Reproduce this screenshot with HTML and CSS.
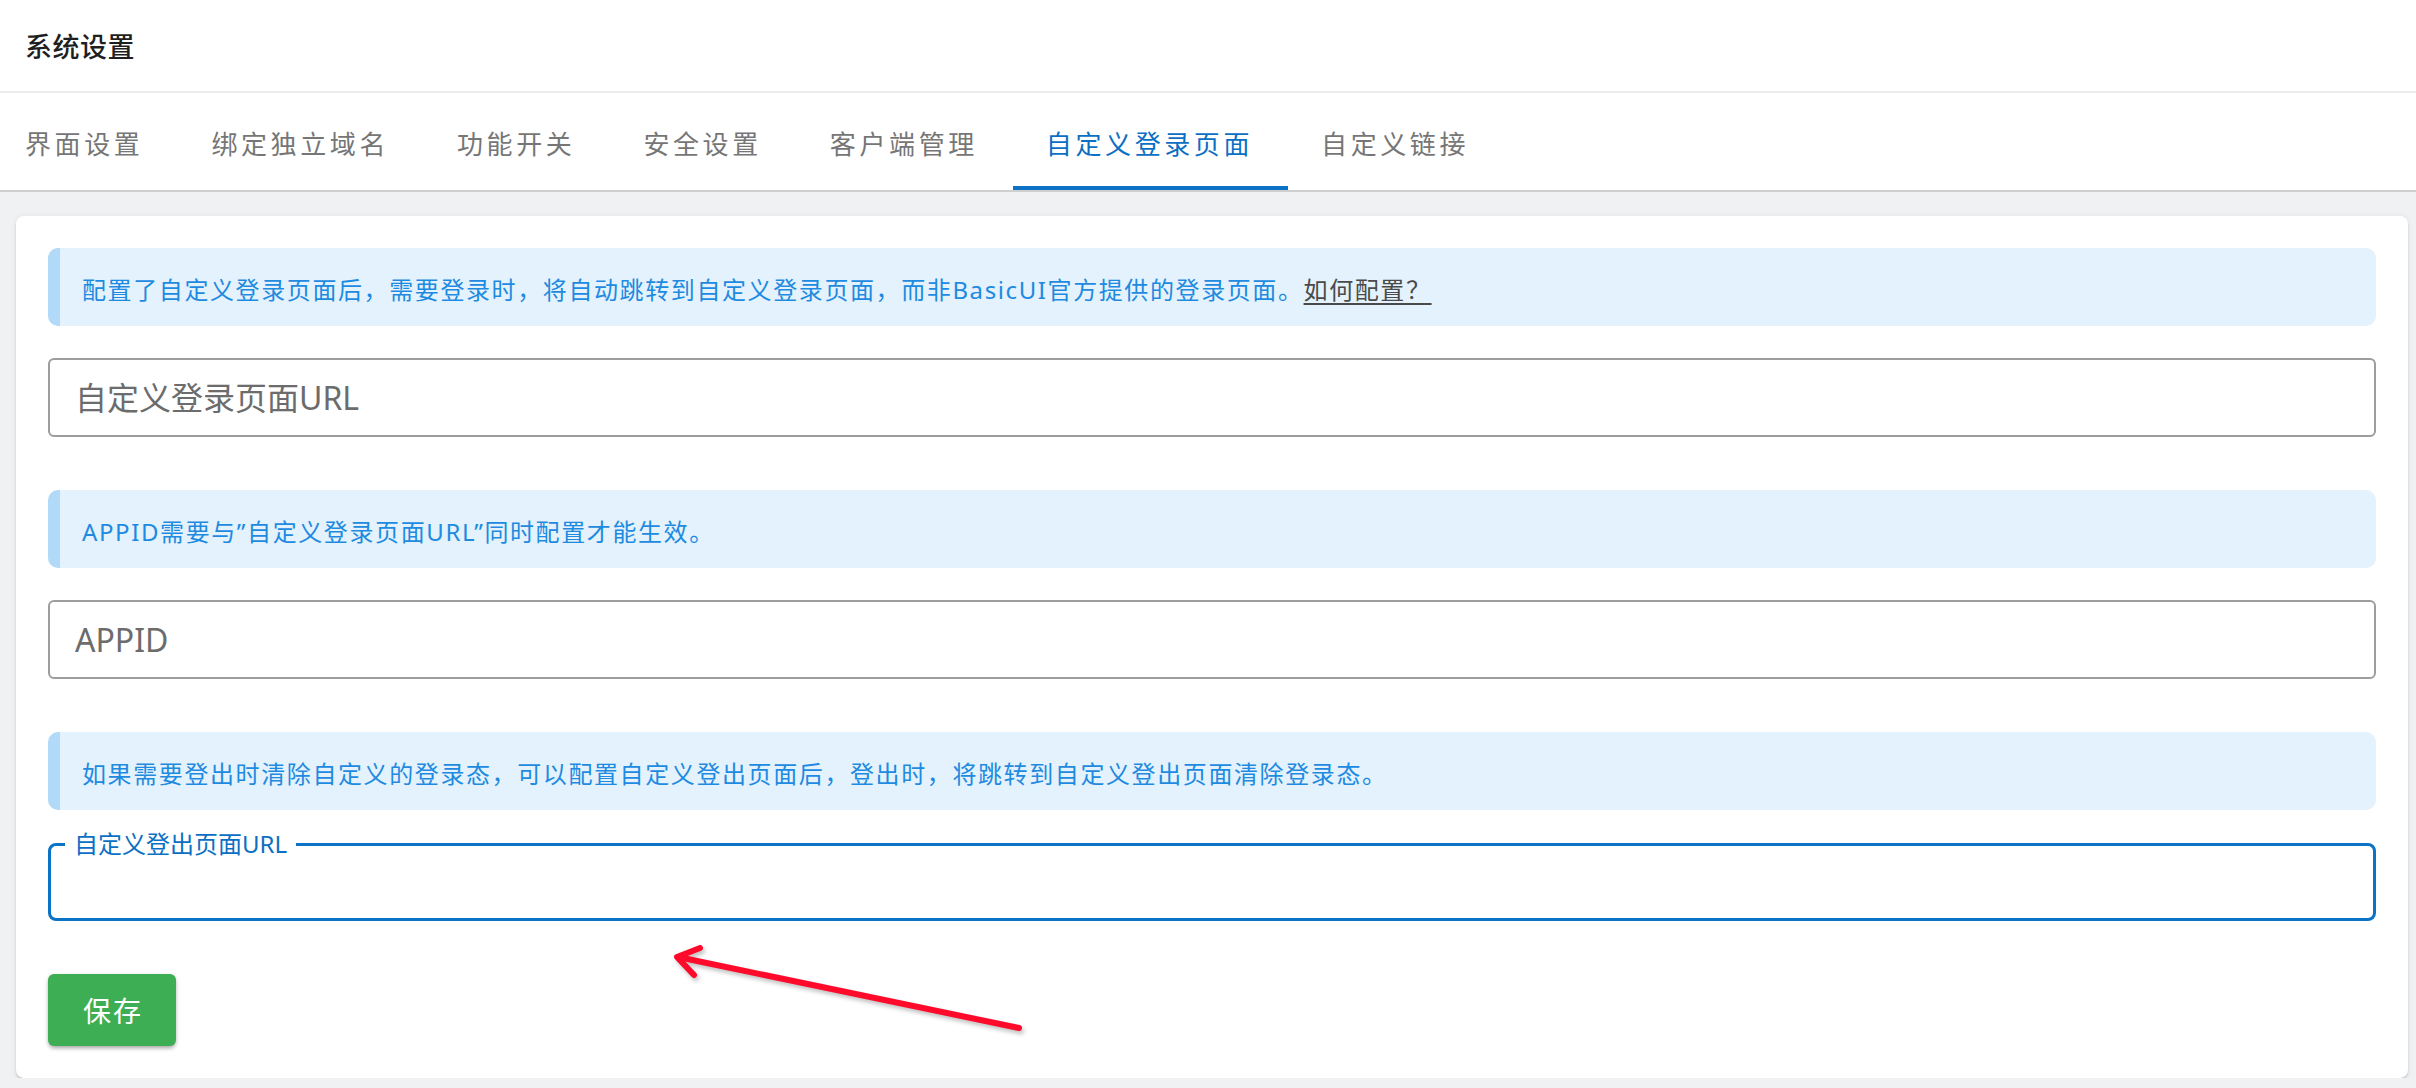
FILE: index.html
```html
<!DOCTYPE html>
<html>
<head>
  <meta charset="utf-8">
  <link rel="stylesheet" href="styles.css">
</head>
<body>
  <!-- Page header -->
  <header class="topbar">
    <h1 class="page-title">系统设置</h1>
  </header>

  <!-- Settings tabs -->
  <nav class="tabs">
    <a class="tab">界面设置</a>
    <a class="tab">绑定独立域名</a>
    <a class="tab">功能开关</a>
    <a class="tab">安全设置</a>
    <a class="tab">客户端管理</a>
    <a class="tab active">自定义登录页面</a>
    <a class="tab">自定义链接</a>
  </nav>

  <main class="content">
    <div class="card">
      <div class="alert">
        <span>配置了自定义登录页面后，需要登录时，将自动跳转到自定义登录页面，而非BasicUI官方提供的登录页面。<a class="alert-link">如何配置？</a></span>
      </div>
      <input class="text-input" type="text" placeholder="自定义登录页面URL">

      <div class="alert">
        <span>APPID需要与”自定义登录页面URL”同时配置才能生效。</span>
      </div>
      <input class="text-input" type="text" placeholder="APPID">

      <div class="alert">
        <span>如果需要登出时清除自定义的登录态，可以配置自定义登出页面后，登出时，将跳转到自定义登出页面清除登录态。</span>
      </div>
      <fieldset class="field-outlined">
        <legend class="field-label">自定义登出页面URL</legend>
        <input class="field-input" type="text">
      </fieldset>

      <button class="btn-save">保存</button>
    </div>
  </main>

  <!-- Red annotation arrow -->
  <svg class="annotation" width="2416" height="1088" viewBox="0 0 2416 1088">
    <g fill="none" stroke="#ff0a2a" stroke-width="6" stroke-linecap="round" stroke-linejoin="round">
      <path d="M1019 1028 L678 957"/>
      <path d="M700 948 L677 957 L694 975"/>
    </g>
  </svg>
</body>
</html>
```

FILE: styles.css
```css
* {
  margin: 0;
  padding: 0;
  box-sizing: border-box;
}

body {
  position: relative;
  background: #f0f1f3;
  font-family: "Noto Sans", "Noto Sans CJK SC", sans-serif;
  overflow: hidden;
}

/* Header */
.topbar {
  height: 93px;
  background: #fff;
  border-bottom: 2px solid #ededed;
  display: flex;
  align-items: center;
  padding-left: 25px;
}

.page-title {
  font-size: 27px;
  font-weight: 500;
  color: #1f1f1f;
  letter-spacing: 0.5px;
}

/* Tabs */
.tabs {
  height: 99px;
  background: #fff;
  border-bottom: 2px solid #cfcfcf;
  display: flex;
}

.tab {
  position: relative;
  display: flex;
  align-items: center;
  padding: 3px 35px 0 33px;
  font-size: 26px;
  letter-spacing: 3.6px;
  color: #767676;
  cursor: pointer;
}

.tab:first-child {
  padding-left: 25px;
}

.tab.active {
  color: #0b6fc3;
}

.tab.active::after {
  content: '';
  position: absolute;
  left: 0;
  right: 0;
  bottom: 0;
  height: 4px;
  background: #0b72c6;
}

/* Content */
.content {
  padding: 24px 8px 0 16px;
}

.card {
  background: #fff;
  border-radius: 8px;
  padding: 32px;
  box-shadow: 0 2px 3px -1px rgba(0, 0, 0, 0.28), 0 1px 6px rgba(0, 0, 0, 0.08);
}

.alert {
  height: 78px;
  display: flex;
  align-items: center;
  padding: 3px 0 0 22px;
  margin-bottom: 32px;
  background: #e3f2fc;
  border-left: 12px solid #b1d9f8;
  border-radius: 10px;
  font-size: 24px;
  letter-spacing: 1.6px;
  color: #1e8ae0;
}

.alert-link {
  color: #4a4a4a;
  text-decoration: underline;
  text-underline-offset: 4px;
  cursor: pointer;
}

.text-input {
  display: block;
  width: 100%;
  height: 79px;
  margin-bottom: 53px;
  padding: 0 25px;
  border: 2px solid #9d9d9d;
  border-radius: 6px;
  font-family: inherit;
  font-size: 32px;
  color: #333;
  outline: none;
}

.text-input::placeholder {
  color: #6c6c6c;
}

/* Focused outlined field */
.field-outlined {
  margin-top: -10px;
  padding: 0 14px;
  border: 3px solid #0b72c6;
  border-radius: 8px;
  min-width: 0;
}

.field-label {
  padding: 0 9px;
  font-size: 24px;
  line-height: 24px;
  color: #0b6fc3;
}

.field-input {
  display: block;
  width: 100%;
  height: 62px;
  border: none;
  outline: none;
  padding: 0 8px;
  font-family: inherit;
  font-size: 32px;
  color: #333;
  background: transparent;
}

.btn-save {
  display: block;
  width: 128px;
  height: 72px;
  margin-top: 53px;
  border: none;
  border-radius: 6px;
  background: #3dae53;
  color: #fff;
  font-family: inherit;
  font-size: 28px;
  letter-spacing: 2px;
  padding-left: 2px;
  cursor: pointer;
  box-shadow: 0 3px 4px -1px rgba(0, 0, 0, 0.3), 0 1px 5px rgba(0, 0, 0, 0.12);
}

/* Annotation overlay */
.annotation {
  position: absolute;
  left: 0;
  top: 0;
  pointer-events: none;
  filter: drop-shadow(2px 3px 2px rgba(0, 0, 0, 0.25));
}
```
